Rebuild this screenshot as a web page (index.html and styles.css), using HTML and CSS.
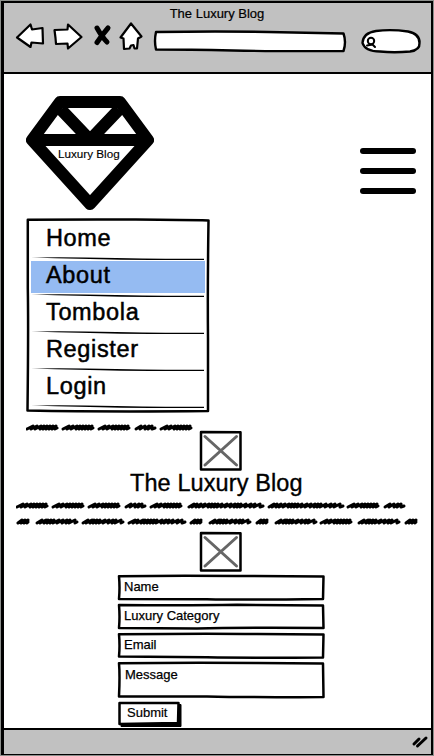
FILE: index.html
```html
<!DOCTYPE html>
<html lang="en">
<head>
<meta charset="utf-8">
<title>The Luxury Blog</title>
<link rel="stylesheet" href="styles.css">
</head>
<body>
<svg class="defs" width="0" height="0" aria-hidden="true">
  <defs>
    <path id="w13" d="M2 6l4-3-1 3 4-3-1 3 4-3-1 3 1-1"/>
    <path id="w20" d="M1 6l5-3-1 3 5-3 0 3 4-3-1 3 4-3 0 3 3-1"/>
    <path id="w31" d="M1 6l6-3-2 3 6-3-2 3 6-3-1 3 4-3-1 3 4-3-1 3 4-3-1 3 4-3-1 3 4-3-1 3 2-1"/>
    <path id="w41" d="M2 6l5-3-2 3 6-3-2 3 4-3-1 3 4-3-1 3 4-3-1 3 6-3-2 3 6-3-1 3 5-3-1 3 4-3-1 3 6-3 0 3 2-1"/>
    <path id="w55" d="M1 6l6-3-2 3 5-3-1 3 6-3-2 3 4-3-1 3 4-3-1 3 4-3-1 3 4-3-1 3 4-3-1 3 6-3-1 3 5-3-2 3 5-3-1 3 5-3-1 3 6-3-1 3 5-3 0 3 3-1"/>
    <path id="w74" d="M2 6l5-3-2 3 5-3-1 3 5-3-2 3 6-3-2 3 6-3-1 3 4-3-1 3 4-3-1 3 4-3-1 3 5-3-1 3 6-3-2 3 6-3-1 3 5-3-1 3 4-3-1 3 4-3-1 3 6-3-1 3 6-3-1 3 5-3-1 3 6-3 0 3 3-1"/>
    <path id="rule" d="M0 .6Q30 0 85 .9T173 1.8V3Q130 3.200 90 2.700T0 .6z"/>
  </defs>
</svg>
<div class="window">
  <header class="chrome">
    <div class="title">The Luxury Blog</div>
    <div class="toolbar">
      <svg class="nav" width="130" height="32" viewBox="0 0 130 32">
        <g class="icon">
          <path d="M2 16.500L15.500 3.500 17 8.500 27.500 7 28 22.500 16.500 21.500 15.500 26z"/>
          <path d="M39.500 9L52.500 8.500 53 3.500 66.500 16 53 27.500 52.500 22.500 41 23 40.500 17z"/>
          <path d="M116 2.500L126.500 15.500 123 17.500 122 27.500H119.500L118.500 24 116 24.500 114.500 27.500 109 28 108.500 17.500 105.500 16.500z"/>
        </g>
        <path class="cross" d="M82 7Q87 16 92 21M93 7Q87 14 82 21.500"/>
      </svg>
      <svg class="address" width="194" height="24" viewBox="0 0 194 24">
        <path d="M3 3Q65 2 115 3T190.500 4.500Q193.500 13 190.500 22 125 22.500 80 21.500T3 20.500Q1 12 3 3z"/>
      </svg>
      <svg class="search" width="62" height="28" viewBox="0 0 62 28">
        <path class="pill" d="M16 4Q31 2 48 4.500 60 7 59.500 16 60 23 50 24.500 34 26 20 24.500 5 24.500 2.500 16 3 6 16 4z"/>
        <circle cx="11" cy="14" r="3.200"/><path d="M7 18.500L12.500 17.500 15 20"/>
      </svg>
    </div>
  </header>
  <main class="page">
    <div class="masthead">
      <div class="logo">
        <svg width="128" height="114" viewBox="26 96 128 114">
          <path d="M60 102H120L148 140 90 204 32 140zM32 140H148"/>
          <path class="facet" d="M61 109.500L90 140 119 109.500"/>
        </svg>
        <span class="brand">Luxury Blog</span>
      </div>
      <div class="burger"><i></i><i></i><i></i></div>
    </div>
    <nav class="menu">
      <svg class="frame" width="184" height="195" viewBox="0 0 184 195"><path d="M1.800 1.800Q60 1.300 110 1.600T182.500 2.500Q181.500 70 182 120L182 193Q80 194 1.500 192.500 2.500 110 1.800 70z"/></svg>
      <a>Home<svg class="rule" width="174" height="4"><use href="#rule"/></svg></a>
      <a class="active">About<svg class="rule" width="174" height="4"><use href="#rule"/></svg></a>
      <a>Tombola<svg class="rule" width="174" height="4"><use href="#rule"/></svg></a>
      <a>Register<svg class="rule" width="174" height="4"><use href="#rule"/></svg></a>
      <a>Login<svg class="rule" width="174" height="4"><use href="#rule"/></svg></a>
    </nav>
    <svg class="scribble short" width="180" height="10">
      <use href="#w31" x="0"/><use href="#w31" x="36"/><use href="#w31" x="72"/><use href="#w20" x="109"/><use href="#w31" x="134"/>
    </svg>
    <svg class="picture" width="44" height="42" viewBox="0 0 44 42"><path class="box" d="M2 2L41.500 2.200 41.500 39.500 2 39.500z"/><path class="x" d="M6 6.500L37.500 35M37.500 6.500L6 35"/></svg>
    <h1>The Luxury Blog</h1>
    <svg class="scribble long" width="410" height="26">
      <use href="#w31" x="0"/><use href="#w31" x="36"/><use href="#w31" x="72"/><use href="#w20" x="109"/><use href="#w31" x="134"/><use href="#w74" x="171"/><use href="#w74" x="251"/><use href="#w31" x="331"/><use href="#w20" x="368"/>
      <g transform="translate(0 16)">
        <use href="#w13" x="0"/><use href="#w41" x="19"/><use href="#w41" x="65"/><use href="#w55" x="112"/><use href="#w13" x="173"/><use href="#w41" x="192"/><use href="#w13" x="239"/><use href="#w41" x="258"/><use href="#w31" x="304"/><use href="#w41" x="341"/><use href="#w13" x="388"/>
      </g>
    </svg>
    <svg class="picture second" width="44" height="42" viewBox="0 0 44 42"><path class="box" d="M2 2L41.500 2.200 41.500 39.500 2 39.500z"/><path class="x" d="M6 6.500L37.500 35M37.500 6.500L6 35"/></svg>
    <form class="form">
      <div class="field"><svg class="frame" width="208" height="27"><path d="M2 2.200Q60 1.300 120 2L206.500 2.500 206 25Q130 26 90 25.300L2 25Q3 14 2 2.200z"/></svg>Name</div>
      <div class="field"><svg class="frame" width="208" height="27"><path d="M2 2Q70 2.600 120 1.800L206 2.500 206.500 25Q120 24.500 80 25.500L2 25Q3 14 2 2z"/></svg>Luxury Category</div>
      <div class="field"><svg class="frame" width="208" height="27"><path d="M2 2.200Q90 1.300 140 2L206.500 2.500 206 25.500Q130 26 90 25.300L2 24.500Q3 14 2 2.200z"/></svg>Email</div>
      <div class="field area"><svg class="frame" width="208" height="38"><path d="M2 2.200Q70 1.500 140 2L206 2.500 206.500 36Q130 36.500 90 35.500L2 35.500Q3 14 2 2.200z"/></svg>Message</div>
      <div class="button"><svg class="frame" width="65" height="27"><path class="shade" d="M60 3.500L64 3.500 64 25.500 4 25.500 4 22z"/><path d="M2.500 2L61.500 2 61 22 2.500 23z"/></svg><span>Submit</span></div>
    </form>
  </main>
  <footer class="status">
    <svg width="18" height="16" viewBox="0 0 18 16"><path d="M3 11L8 6M6.500 13L15 5"/></svg>
  </footer>
</div>
</body>
</html>
```
FILE: styles.css
```css
* { box-sizing: border-box; }
body {
  margin: 0;
  padding: 1px;
  height: 756px;
  overflow: hidden;
  background: #8c8f8c;
  color: #000;
  font-family: "Liberation Sans", Arial, sans-serif;
}
svg { display: block; flex: none; }
svg path, svg circle { stroke-linecap: round; stroke-linejoin: round; }
.defs { position: absolute; }
.window {
  display: flex;
  flex-direction: column;
  width: 432px;
  height: 754px;
  border: solid #000;
  border-width: 2px 2px 2px 3px;
  background: #fff;
}
.chrome { height: 71px; flex: none; background: #c1c1c1; border-bottom: 2px solid #000; }
.title {
  height: 19px;
  padding: 3px 1px 0 0;
  font-size: 13px;
  line-height: 16px;
  text-align: center;
  -webkit-text-stroke: .2px #000;
}
.toolbar { display: flex; align-items: flex-start; padding-left: 11px; }
.nav { margin-top: -1px; }
.icon { fill: #fff; stroke: #000; stroke-width: 2.2; }
.cross { fill: none; stroke: #000; stroke-width: 5; }
.address { margin: 7px 0 0 8px; fill: #fff; stroke: #000; stroke-width: 2.4; }
.search { margin: 5px 0 0 13px; fill: none; stroke: #000; stroke-width: 2; }
.search .pill { fill: #fff; stroke-width: 2.4; }

.page { flex: 1; padding: 22px 0 0 22px; }
.masthead { display: flex; justify-content: space-between; height: 122px; padding-right: 15px; }
.logo { position: relative; width: 128px; }
.logo svg { fill: #fff; stroke: #000; stroke-width: 12; }
.logo .facet { fill: none; stroke-linecap: butt; }
.brand {
  position: absolute;
  left: 32px;
  top: 51px;
  font-size: 11.7px;
  line-height: 14px;
  white-space: nowrap;
  -webkit-text-stroke: .15px #000;
}
.burger { display: flex; flex-direction: column; gap: 14px; padding-top: 52px; }
.burger i { width: 56px; height: 6px; border-radius: 3px; background: #000; }
.frame { position: absolute; left: 0; top: 0; fill: none; stroke: #000; stroke-width: 2.5; }

.menu { position: relative; width: 184px; height: 195px; padding: 5px; }
.menu a {
  position: relative;
  display: block;
  height: 37px;
  padding-left: 15px;
  font-size: 23.5px;
  line-height: 30px;
  letter-spacing: .65px;
  -webkit-text-stroke: .5px #000;
}
.menu .active { background: linear-gradient(#95bbf2, #95bbf2) 0 1px / 174px 32px no-repeat; }
.rule { position: absolute; left: 0; bottom: -1px; }

.scribble { fill: none; stroke: #000; stroke-width: 3; }
.short { margin-top: 10px; }
.picture { margin: -3px 0 0 173px; }
.picture .box { fill: #fff; stroke: #000; stroke-width: 2.5; }
.picture .x { stroke: #666; stroke-width: 3; }
.page h1 {
  margin: -2px 0 0 104px;
  font-size: 23.5px;
  line-height: 26px;
  font-weight: 400;
  letter-spacing: .1px;
  -webkit-text-stroke: .35px #000;
}
.long { margin: 5px 0 0 -10px; }
.picture.second { margin-top: 4px; }
.form { display: flex; flex-direction: column; gap: 2px; width: 208px; margin: 1px 0 0 91px; }
.field {
  position: relative;
  height: 27px;
  padding: 5px 0 0 7px;
  font-size: 13px;
  line-height: 16px;
  -webkit-text-stroke: .25px #000;
}
.area { height: 38px; padding: 6px 0 0 8px; }
.button {
  position: relative;
  width: 65px;
  height: 27px;
  padding: 4px 0 0 10px;
  font-size: 13px;
  line-height: 16px;
  -webkit-text-stroke: .2px #000;
}
.button path { fill: #fff; }
.button .shade { fill: #000; stroke-width: 1; }
.button span { position: relative; }
.status {
  display: flex;
  justify-content: flex-end;
  height: 26px;
  flex: none;
  padding: 3px 2px 0 0;
  background: #c1c1c1;
  border-top: 2px solid #000;
}
.status svg { fill: none; stroke: #000; stroke-width: 3; }
```
